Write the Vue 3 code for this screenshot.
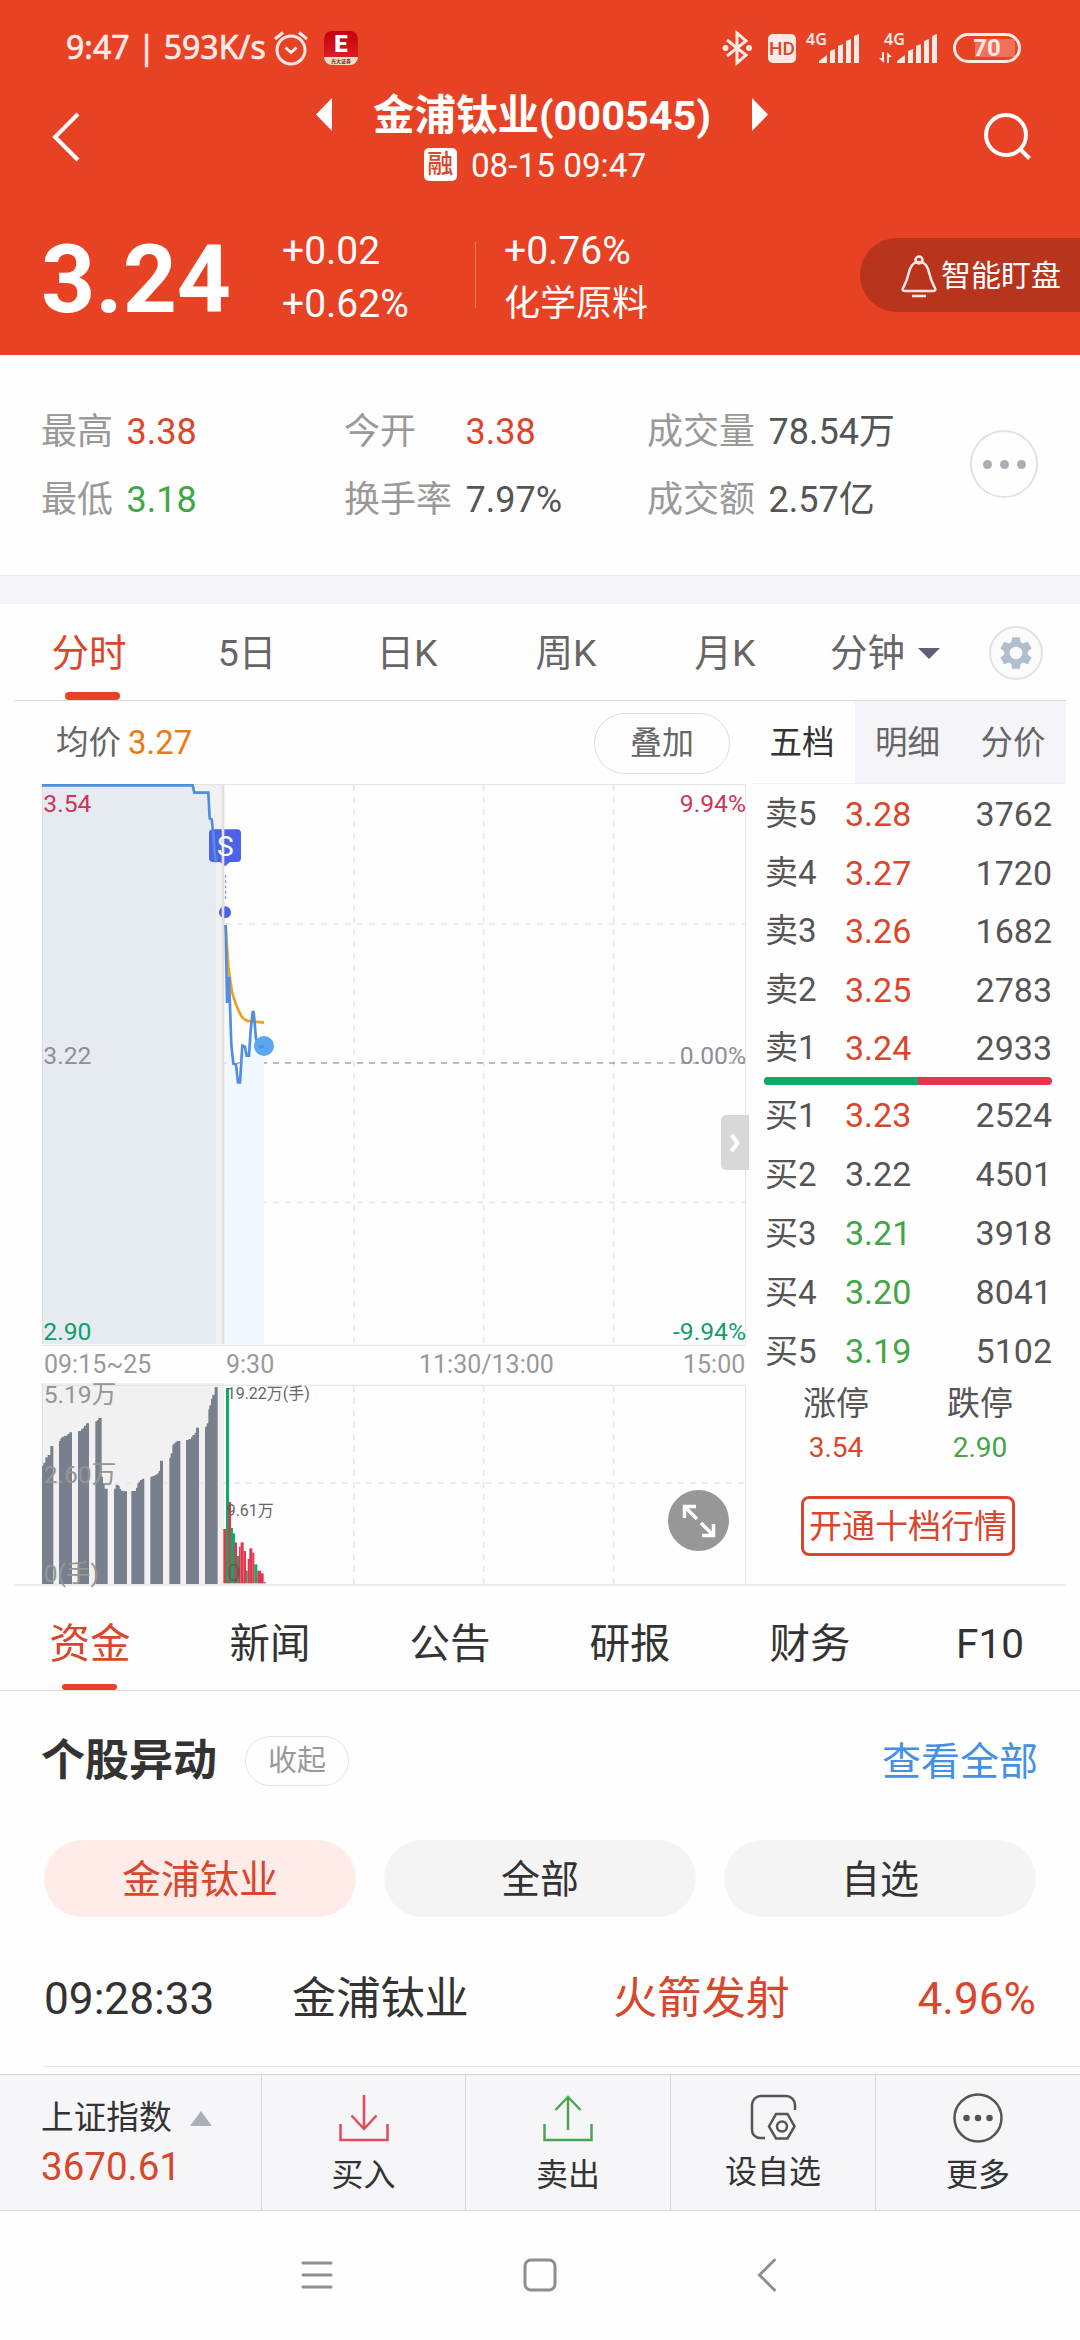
<template>
  <main class="page">
    <header class="header">
      <div class="status">
        <span class="status__time">9:47 | 593K/s</span>
        <svg class="status__alarm" width="36" height="36" viewBox="0 0 36 36">
          <circle cx="18" cy="20" r="14" />
          <path d="M12.5 17.5l5.5 5 5.5-5M2 9l8-6.500M34 9l-8-6.500" />
        </svg>
        <span class="status__app">
          <b class="status__app-letter">E</b>
          <i class="status__app-name">光大证券</i>
        </span>
        <div class="status__right">
          <svg class="status__bt" width="30" height="36" viewBox="0 0 30 36">
            <path d="M5 10l19 15-9 8V3l9 8L5 26" />
            <circle class="status__dot" cx="3.500" cy="18" r="3" />
            <circle class="status__dot" cx="27" cy="18" r="3" />
          </svg>
          <span class="status__hd">HD</span>
          <svg
            v-for="sim in 2"
            :key="sim"
            :class="['status__signal', { 'status__signal--data': sim === 2 }]"
            width="58"
            height="34"
            viewBox="0 0 58 34"
          >
            <text x="5" y="14">4G</text>
            <path
              d="M18 32v-2l8-6v8zM29 32V20l5-2v14zM37 32V15l5-2v19zM45 32V10l5-2v24zM53 32V5l5-2v29z"
            />
            <path
              v-if="sim === 2"
              d="M0 27h3v-6h2v11zM8 32V21l5 5h-3v6z"
            />
          </svg>
          <span class="status__battery"><b>70</b></span>
        </div>
      </div>

      <div class="title">
        <svg class="title__back" width="30" height="50" viewBox="0 0 30 50">
          <path d="M27 2L4 25l23 23" />
        </svg>
        <div class="title__center">
          <div class="title__name">
            <svg width="16" height="33" viewBox="0 0 16 33">
              <path d="M16 0v33L0 16.500z" />
            </svg>
            <h1 class="title__h1">金浦钛业(000545)</h1>
            <svg width="16" height="33" viewBox="0 0 16 33">
              <path d="M0 0v33l16-16.500z" />
            </svg>
          </div>
          <div class="title__date">
            <span class="title__badge">融</span>
            <span>08-15 09:47</span>
          </div>
        </div>
        <svg class="title__search" width="50" height="50" viewBox="0 0 50 50">
          <circle cx="23" cy="23" r="20" />
          <path d="M37 37l9.500 9.500" />
        </svg>
      </div>

      <div class="price">
        <strong class="price__now">3.24</strong>
        <div class="price__col"><span>+0.02</span><span>+0.62%</span></div>
        <div class="price__col price__col--sector">
          <span>+0.76%</span><span class="price__sector">化学原料</span>
        </div>
        <button class="price__watch">
          <svg width="36" height="42" viewBox="0 0 36 42">
            <circle cx="18" cy="5" r="3.500" />
            <path
              d="M18 7c-7 0-9 6-10.500 12C6 26 4 29 2 33c-1 2 0 3 2 3h28c2 0 3-1 2-3-2-4-4-7-5.500-14C27 13 25 7 18 7zM11 41h14"
            />
          </svg>
          智能盯盘
        </button>
      </div>
    </header>

    <section class="stats">
      <dl class="stats__grid">
        <div v-for="s in stats" :key="s.label" class="stats__item">
          <dt class="stats__label">{{ s.label }}</dt>
          <dd :class="['stats__value', s.tone]">{{ s.value }}</dd>
        </div>
      </dl>
      <span class="stats__more"><i></i><i></i><i></i></span>
    </section>

    <nav class="periods">
      <a
        v-for="(p, i) in periods"
        :key="p"
        :class="['periods__tab', { 'periods__tab--active': i === 0 }]"
        >{{ p }}</a
      >
      <a class="periods__minute">分钟<i class="periods__caret"></i></a>
      <span class="periods__gear">
        <svg width="38" height="38" viewBox="0 0 24 24">
          <path
            d="M19.430 12.980c.04-.32.07-.64.07-.98s-.03-.66-.07-.98l2.110-1.650c.19-.15.24-.42.12-.64l-2-3.460c-.12-.22-.39-.3-.61-.22l-2.490 1c-.52-.4-1.080-.73-1.690-.98l-.38-2.650C14.460 2.180 14.250 2 14 2h-4c-.25 0-.46.18-.49.42l-.38 2.650c-.61.25-1.170.59-1.690.98l-2.490-1c-.23-.09-.49 0-.61.22l-2 3.460c-.13.22-.07.49.12.64l2.110 1.650c-.04.32-.07.65-.07.98s.03.66.07.98l-2.110 1.650c-.19.15-.24.42-.12.64l2 3.460c.12.22.39.3.61.22l2.490-1c.52.4 1.080.73 1.690.98l.38 2.650c.03.24.24.42.49.42h4c.25 0 .46-.18.49-.42l.38-2.650c.61-.25 1.170-.59 1.690-.98l2.490 1c.23.09.49 0 .61-.22l2-3.460c.12-.22.07-.49-.12-.64zM12 16a4 4 0 110-8 4 4 0 010 8z"
          />
        </svg>
      </span>
    </nav>

    <section class="quote">
      <div class="chart">
        <div class="chart__head">
          <span>均价</span><span class="chart__avg">3.27</span>
          <button class="chart__overlay">叠加</button>
        </div>

        <div class="chart__plot">
          <svg class="chart__svg" width="708" height="562" viewBox="126 252 2124 1686">
            <path class="zone" d="M126 252H673V1932H126z" />
            <path class="pre-area" :d="`${preLine}V1932H126z`" />
            <path class="grid" d="M1062 254V1932M1451 254V1932M1841 254V1932" />
            <path class="grid" d="M675 672H2237M675 1507H2237" />
            <path class="grid grid--zero" d="M675 1089H2237" />
            <path class="frame" d="M126 254H2237V1932M126 1936H2237" />
            <path class="frame frame--left" d="M127 254V1932" />
            <path class="area" :d="`${priceLine}V1932H677z`" />
            <path
              class="marker"
              d="M639 388H711a12 12 0 0 1 12 12V474a12 12 0 0 1-12 12H690L675 499 660 486H639a12 12 0 0 1-12-12V400a12 12 0 0 1 12-12z"
            />
            <circle class="marker" cx="675" cy="637" r="18" />
            <path class="stem" d="M677 525V604" />
            <path class="open-bar" d="M669 254V1932" />
            <text class="marker-text" x="676" y="467">S</text>
            <path class="line" :d="preLine" />
            <path class="line line--avg" d="M677 675L685 800 696 875Q708 920 724 948 735 965 756 964L792 968" />
            <path class="line" :d="priceLine" />
            <circle class="now" cx="792" cy="1038" r="30" />
            <path class="line" d="M775 1040H792" />
            <text class="axis axis--up" x="130" y="335">3.54</text>
            <text class="axis axis--flat" x="130" y="1091">3.22</text>
            <text class="axis axis--down" x="130" y="1920">2.90</text>
            <text class="axis axis--up axis--end" x="2238" y="335">9.94%</text>
            <text class="axis axis--flat axis--end" x="2238" y="1091">0.00%</text>
            <text class="axis axis--down axis--end" x="2238" y="1920">-9.94%</text>
          </svg>
          <span class="chart__handle">
            <svg width="12" height="22" viewBox="0 0 12 22">
              <path d="M2.500 3l6 8-6 8" />
            </svg>
          </span>
        </div>

        <div class="chart__times">
          <span>09:15~25</span><span>9:30</span><span>11:30/13:00</span
          ><span>15:00</span>
        </div>

        <div class="chart__volume">
          <svg class="chart__svg" width="708" height="201" viewBox="126 189 2124 603">
            <path class="zone" d="M126 189H673V792H126z" />
            <path class="frame" d="M126 196H2237V792" />
            <path class="frame frame--left" d="M127 189V792" />
            <path class="grid" d="M1062 198V792M1451 198V792M1841 198V792M126 489H2237" />
            <path v-for="d in preBars" :key="d" class="pre-bar" :d="`M${d}V792z`" />
            <rect
              v-for="[x, w, y, up] in bars"
              :key="x"
              :class="up ? 'bar--up' : 'bar--down'"
              :x="x"
              :y="y"
              :width="w"
              :height="790 - y"
            />
            <text class="axis axis--vol" x="131" y="248">5.19万</text>
            <text class="axis axis--vol" x="131" y="489">2.60万</text>
            <text class="axis axis--vol" x="131" y="785">0(手)</text>
            <text class="axis axis--small" x="680" y="238">19.22万(手)</text>
            <text class="axis axis--small" x="680" y="589">9.61万</text>
            <text class="axis axis--faint" x="680" y="782">0</text>
          </svg>
          <span class="chart__expand">
            <svg width="34" height="34" viewBox="0 0 34 34">
              <path d="M15 15L2.500 2.500M2.500 14V2.500H14M19 19l12.500 12.500M31.500 20v11.500H20" />
            </svg>
          </span>
        </div>
      </div>

      <aside class="book">
        <div class="book__tabs">
          <span class="book__tab book__tab--active">五档</span>
          <span class="book__tab">明细</span>
          <span class="book__tab">分价</span>
        </div>
        <ul class="book__list">
          <li v-for="r in sells" :key="r[0]" class="book__row">
            <span>{{ r[0] }}</span><span :class="r[3]">{{ r[1] }}</span><span>{{ r[2] }}</span>
          </li>
        </ul>
        <div class="book__ratio"><i></i></div>
        <ul class="book__list book__list--buy">
          <li v-for="r in buys" :key="r[0]" class="book__row">
            <span>{{ r[0] }}</span><span :class="r[3]">{{ r[1] }}</span><span>{{ r[2] }}</span>
          </li>
        </ul>
        <div class="book__limits">
          <span>涨停</span><span>跌停</span>
          <b class="up">3.54</b><b class="down">2.90</b>
        </div>
        <button class="book__open">开通十档行情</button>
      </aside>
    </section>

    <nav class="sections">
      <a
        v-for="(s, i) in sections"
        :key="s"
        :class="['sections__tab', { 'sections__tab--active': i === 0 }]"
        >{{ s }}</a
      >
    </nav>

    <section class="moves">
      <div class="moves__head">
        <h2 class="moves__h2">个股异动</h2>
        <button class="moves__fold">收起</button>
        <a class="moves__all">查看全部</a>
      </div>
      <div class="moves__chips">
        <span class="moves__chip moves__chip--active">金浦钛业</span>
        <span class="moves__chip">全部</span>
        <span class="moves__chip">自选</span>
      </div>
      <div class="moves__row">
        <span>09:28:33</span>
        <span>金浦钛业</span>
        <span class="up">火箭发射</span>
        <span class="up moves__pct">4.96%</span>
      </div>
    </section>

    <footer class="dock">
      <div class="dock__index">
        <span class="dock__name">上证指数<i class="dock__caret"></i></span>
        <span class="dock__points up">3670.61</span>
      </div>
      <a class="dock__item">
        <svg class="dock__icon dock__icon--buy" width="52" height="52" viewBox="0 0 52 52">
          <path d="M26 3v34M13.500 23.500L26 37l12.500-13.500M2.500 32v16h47V32" />
        </svg>
        买入
      </a>
      <a class="dock__item">
        <svg class="dock__icon dock__icon--sell" width="52" height="52" viewBox="0 0 52 52">
          <path d="M26 38V5M13.500 18L26 5l12.500 13M2.500 32v16h47V32" />
        </svg>
        卖出
      </a>
      <a class="dock__item dock__item--watch">
        <svg class="dock__icon" width="52" height="52" viewBox="0 0 52 52">
          <path
            d="M48 18V13a9 9 0 0 0-9-9H14a9 9 0 0 0-9 9v25a8 8 0 0 0 8 8h5M29 22h11.500l7 12.500-7 12H29l-7-12z"
          />
          <circle cx="35" cy="34.500" r="5" />
        </svg>
        设自选
      </a>
      <a class="dock__item">
        <svg class="dock__icon" width="52" height="52" viewBox="0 0 52 52">
          <circle cx="26" cy="26" r="23.500" />
          <path class="dock__dots" d="M14.500 26h.01M26 26h.01M37.500 26h.01" />
        </svg>
        更多
      </a>
    </footer>

    <div class="keys">
      <svg width="32" height="34" viewBox="0 0 32 34">
        <path d="M2 5h28M2 17h28M2 29h28" />
      </svg>
      <svg class="keys__home" width="34" height="34" viewBox="0 0 34 34">
        <rect x="2" y="2" width="30" height="30" rx="6" />
      </svg>
      <svg width="20" height="34" viewBox="0 0 20 34">
        <path d="M17.500 2l-15 15 15 15" />
      </svg>
    </div>
  </main>
</template>

<script setup>
const stats = [
  { label: "最高", value: "3.38", tone: "up" },
  { label: "今开", value: "3.38", tone: "up" },
  { label: "成交量", value: "78.54万" },
  { label: "最低", value: "3.18", tone: "down" },
  { label: "换手率", value: "7.97%" },
  { label: "成交额", value: "2.57亿" },
];

const periods = ["分时", "5日", "日K", "周K", "月K"];
const sections = ["资金", "新闻", "公告", "研报", "财务", "F10"];

const sells = [
  ["卖5", "3.28", "3762", "up"],
  ["卖4", "3.27", "1720", "up"],
  ["卖3", "3.26", "1682", "up"],
  ["卖2", "3.25", "2783", "up"],
  ["卖1", "3.24", "2933", "up"],
];
const buys = [
  ["买1", "3.23", "2524", "up"],
  ["买2", "3.22", "4501", ""],
  ["买3", "3.21", "3918", "down"],
  ["买4", "3.20", "8041", "down"],
  ["买5", "3.19", "5102", "down"],
];

// chart coordinates are in thirds of a pixel
const preLine = "M126 256H578L583 278H625L629 355 635 358 640 400 643 450 648 487";
const priceLine =
  "M677 675L681 905H686L687 830 694 1035 700 1091 708 1093 714 1147H720L727 1037 735 1040 740 1067H747L752 990 758 936H761L768 1015 775 1040H792";

const preBars = [
  "126 792V437H130V428H136V412H143V405H151V378H160",
  "177 792V363H181V355H186V350H193V347H202V342H208V337H216",
  "234 792V333H243V328H248V323H252V317H258V310H267",
  "286 792V304H291V300H295V294H305V470H309V490H314V506H323",
  "342 792V506H347V494H355V497H359V507H363V512H370V514H381",
  "394 792V513H408V503H412V490H416V485H420V480H426V476H433",
  "451 792V470H458V467H465V464H472V460H476V452H480V422H489",
  "508 792V413H512V400H517V374H521V370H526V366H530V363H541",
  "558 792V360H566V357H573V352H577V345H584V338H588V323H597",
  "615 792V320H620V310H625V268H628V256H633V236H637V224H644V201H653",
];

// x, width, top, rising
const bars = [
  [670, 9, 627, true],
  [678, 9, 204, false],
  [685, 8, 546, true],
  [692, 7, 624, false],
  [699, 6, 640, false],
  [703, 8, 667, true],
  [711, 6, 708, false],
  [717, 5, 680, true],
  [722, 9, 667, true],
  [731, 7, 693, true],
  [738, 5, 752, false],
  [743, 6, 717, true],
  [748, 9, 685, true],
  [757, 6, 698, true],
  [763, 9, 733, false],
  [772, 11, 752, true],
  [783, 8, 760, true],
  [791, 6, 786, true],
];
</script>

<style>
body {
  background: #fefefe;
}
</style>

<style scoped>
.page {
  color: #333;
  font-family: Roboto, "Noto Sans CJK SC", sans-serif;
  height: 2340px;
  line-height: 1.2;
  overflow: hidden;
  width: 1080px;
}

.page *,
.page *::after {
  box-sizing: border-box;
}

svg {
  display: block;
  flex: none;
  overflow: visible;
}

h1,
h2,
dl,
dd,
ul {
  margin: 0;
  padding: 0;
}

button {
  background: none;
  border: 0;
  font-family: inherit;
  line-height: inherit;
  padding: 0;
  white-space: nowrap;
}

.up {
  color: #d8472c;
}

.down {
  color: #43a547;
}

.header {
  background: #e84225;
  color: #fff;
  height: 355px;
}

/* status bar */
.status {
  align-items: center;
  color: #ffe9e4;
  display: flex;
  height: 96px;
  padding: 0 59px 0 66px;
}

.status__time {
  -webkit-text-stroke: 0.7px currentColor;
  font-family: "Noto Sans", sans-serif;
  font-size: 32px;
  line-height: 40px;
  margin-top: -3px;
  white-space: nowrap;
  width: 207px;
}

.status__alarm {
  fill: none;
  stroke: currentColor;
  stroke-width: 3;
}

.status__app {
  background: linear-gradient(#c4000c, #d81f22 76%, #f8dcc4 76%);
  border-radius: 8px;
  display: flex;
  flex-direction: column;
  height: 34px;
  margin-left: 15px;
  overflow: hidden;
  text-align: center;
  width: 34px;
}

.status__app-letter {
  color: #fff;
  font-size: 24px;
  font-weight: 900;
  line-height: 27px;
}

.status__app-name {
  color: #6a2a1a;
  font-size: 5px;
  font-style: normal;
  font-weight: bold;
  line-height: 6px;
}

.status__right {
  align-items: center;
  display: flex;
  margin-left: auto;
}

.status__bt {
  fill: none;
  stroke: currentColor;
  stroke-width: 3;
}

.status__dot {
  fill: currentColor;
  stroke: none;
}

.status__hd {
  background: #ffe9e4;
  border-radius: 5px;
  color: #d8472c;
  font-size: 19px;
  font-weight: 500;
  height: 29px;
  line-height: 30px;
  margin-left: 16px;
  text-align: center;
  width: 28px;
}

.status__signal {
  fill: currentColor;
  font: 600 16px "Noto Sans", sans-serif;
  margin-left: 5px;
}

.status__signal--data {
  margin-left: 20px;
}

.status__battery {
  align-items: center;
  background: linear-gradient(#f0705a, #f0705a) 19px 3px / 40px 18px no-repeat;
  border: 3px solid #ffe9e4;
  border-radius: 15px;
  display: flex;
  font-size: 24px;
  height: 30px;
  justify-content: center;
  margin-left: 16px;
  width: 68px;
}

/* title */
.title {
  align-items: center;
  display: flex;
  height: 88px;
  justify-content: space-between;
  padding: 0 47px 0 51px;
}

.title__back,
.title__search {
  fill: none;
  margin-top: -7px;
  stroke: #fff;
  stroke-width: 4;
}

.title__center {
  margin-left: 20px;
}

.title__name {
  align-items: center;
  display: flex;
  fill: #fff;
  height: 40px;
  justify-content: space-between;
  width: 453px;
}

.title__name svg {
  margin-top: -3px;
}

.title__h1 {
  font-size: 41.5px;
  font-weight: bold;
  line-height: 40px;
  white-space: nowrap;
}

.title__date {
  align-items: center;
  display: flex;
  font-size: 33.3px;
  gap: 14px;
  justify-content: center;
  line-height: 36px;
  padding: 12px 14px 0 0;
  white-space: nowrap;
}

.title__badge {
  background: #fff;
  border-radius: 5px;
  color: #d8472c;
  font-size: 26px;
  font-weight: 500;
  height: 33px;
  line-height: 32px;
  margin-top: -4px;
  text-align: center;
  width: 33px;
}

/* price */
.price {
  align-items: center;
  display: grid;
  grid-template-columns: 241px 193px 385px 220px;
  height: 171px;
  padding: 11px 0 0 41px;
}

.price__now {
  font-size: 94.5px;
  line-height: 100px;
  margin-top: 9px;
}

.price__col {
  display: flex;
  flex-direction: column;
  font-size: 39px;
  line-height: 53px;
  margin-top: 6px;
}

.price__col--sector {
  background: linear-gradient(#f3806c, #f3806c) 0 17px / 1px 66px no-repeat;
  padding-left: 29px;
}

.price__sector {
  font-size: 36px;
}

.price__watch {
  align-items: center;
  background: #b8341d;
  border-radius: 37px 0 0 37px;
  color: #fff;
  display: flex;
  font-size: 30px;
  gap: 4px;
  height: 74px;
  padding: 1px 0 0 41px;
}

.price__watch svg {
  fill: none;
  stroke: #ffe9e4;
  stroke-width: 2.5;
}

/* stats */
.stats {
  border-bottom: 1px solid #eaeaec;
  display: flex;
  height: 221px;
  justify-content: space-between;
  padding: 44px 42px 0 41px;
}

.stats__grid {
  display: grid;
  grid-template-columns: 303px 303px 290px;
  grid-template-rows: 68px 68px;
}

.stats__item {
  align-items: center;
  display: flex;
  font-size: 36px;
}

.stats__label {
  color: #999;
  width: 121.5px;
}

.stats__item:nth-child(3n + 1) .stats__label {
  width: 85.5px;
}

.stats__value:not(.up, .down) {
  color: #555;
}

.stats__more {
  align-items: center;
  border: 2px solid #e2e2e2;
  border-radius: 50%;
  display: flex;
  gap: 8px;
  height: 68px;
  justify-content: center;
  margin-top: 31px;
  width: 68px;
}

.stats__more i {
  background: #a9aeb7;
  border-radius: 50%;
  height: 9px;
  width: 9px;
}

/* period tabs */
.periods {
  align-items: center;
  background: linear-gradient(#dcdcde, #dcdcde) 14px 100% / 1052px 1px no-repeat;
  border-top: 28px solid #f5f4f9;
  color: #666;
  display: grid;
  font-size: 37.5px;
  grid-template-columns: 150px 166px 154px 164px 154px 187px 54px;
  height: 125px;
  padding: 0 14px;
}

.periods__tab {
  height: 97px;
  line-height: 98px;
  position: relative;
  text-align: center;
}

.periods__tab--active {
  color: #d8472c;
}

.periods__tab--active::after {
  background: #e84225;
  border-radius: 4px;
  bottom: 1px;
  content: "";
  height: 8px;
  left: 51px;
  position: absolute;
  width: 55px;
}

.periods__minute {
  align-items: center;
  display: flex;
  gap: 13px;
  padding: 1px 0 0 28px;
}

.periods__caret {
  border: 11px solid transparent;
  border-bottom: 0;
  border-top-color: #5d6078;
}

.periods__gear {
  background: #fbfbfc;
  border: 2px solid #e2e2e2;
  border-radius: 50%;
  display: grid;
  fill: #b0bfd0;
  height: 54px;
  place-items: center;
  width: 54px;
}

/* quote */
.quote {
  border-bottom: 2px solid #ececec;
  display: flex;
  height: 885px;
  justify-content: space-between;
  margin: 0 14px;
  padding-left: 28px;
}

.chart {
  width: 708px;
}

.chart__head {
  align-items: center;
  color: #666;
  display: flex;
  font-size: 32.5px;
  height: 83px;
  padding: 1px 20px 0 14px;
}

.chart__avg {
  color: #e97b12;
  font-size: 33px;
  margin-left: 7px;
}

.chart__overlay {
  border: 1px solid #ddd;
  border-radius: 31px;
  color: #666;
  font-size: 32px;
  height: 61px;
  margin-left: auto;
  width: 136px;
}

.chart__plot,
.chart__volume {
  position: relative;
}

.chart__svg {
  fill: none;
}

.zone {
  fill: #f1f1f1;
}

.pre-area {
  fill: #e6ebf2;
}

.area {
  fill: #f1f8ff;
}

.grid {
  stroke: #e8e8e8;
  stroke-dasharray: 18 18;
  stroke-width: 5;
}

.grid--zero {
  stroke: #a5a5a5;
}

.frame {
  stroke: #e2e2e2;
  stroke-width: 3;
}

.frame--left {
  stroke: #d9dce2;
}

.open-bar {
  stroke: #e0e0e0;
  stroke-width: 8;
}

.line {
  stroke: #528ee0;
  stroke-width: 8;
}

.line--avg {
  stroke: #efa01f;
}

.marker {
  fill: #4e62e8;
}

.stem {
  stroke: #6472e0;
  stroke-dasharray: 8 8;
  stroke-width: 3;
}

.marker-text {
  fill: #fff;
  font-size: 84px;
  text-anchor: middle;
}

.now {
  fill: #5ba6f0;
}

.axis {
  font-size: 74px;
}

.axis--end {
  text-anchor: end;
}

.axis--up {
  fill: #cf3557;
}

.axis--flat {
  fill: #8d9097;
}

.axis--down {
  fill: #119e69;
}

.axis--vol {
  fill: #959595;
}

.axis--small {
  fill: #666;
  font-size: 48px;
}

.axis--faint {
  fill: #555;
  fill-opacity: 0.6;
}

.pre-bar {
  fill: #79808d;
}

.bar--up {
  fill: #e5344c;
}

.bar--down {
  fill: #0cab68;
}

.chart__handle {
  align-items: center;
  background: #d8d8d8;
  border-radius: 5px 0 0 5px;
  display: flex;
  height: 55px;
  left: 679px;
  padding-left: 8px;
  position: absolute;
  top: 331px;
  width: 28px;
}

.chart__handle path,
.chart__expand path {
  fill: none;
  stroke: #fff;
  stroke-width: 4;
}

.chart__times {
  color: #999;
  display: grid;
  font-size: 25px;
  grid-template-columns: 182px 193px 264px auto;
  height: 37px;
  line-height: 38px;
  padding-left: 2px;
}

.chart__expand {
  background: #979797;
  border-radius: 50%;
  display: grid;
  height: 61px;
  left: 626px;
  place-items: center;
  position: absolute;
  top: 107px;
  width: 61px;
}

.chart__expand path {
  stroke-width: 3.5;
}

/* order book */
.book {
  color: #555;
  width: 314px;
}

.book__tabs {
  border-bottom: 1px solid #f1f1f3;
  display: grid;
  font-size: 32.5px;
  grid-template-columns: 103px 105px 106px;
  height: 83px;
  line-height: 84px;
  overflow: hidden;
  text-align: center;
}

.book__tab {
  background: #f5f4f9;
  color: #666;
}

.book__tab--active {
  background: none;
  color: #333;
  text-indent: -3px;
}

.book__list {
  list-style: none;
  padding: 1px 14px 0 13px;
}

.book__row {
  display: grid;
  font-size: 34px;
  grid-template-columns: 80px 100px 1fr;
  height: 58.6px;
  line-height: 58.6px;
}

.book__list--buy .book__row {
  height: 59px;
  line-height: 59px;
}

.book__row span:first-child {
  font-size: 33px;
}

.book__row span:last-child {
  text-align: right;
}

.book__ratio {
  background: #e5344c;
  border-radius: 4px;
  height: 8px;
  margin: -1px 14px 0 12px;
  overflow: hidden;
}

.book__ratio i {
  background: #0cab68;
  display: block;
  height: 8px;
  width: 154px;
}

.book__limits {
  display: grid;
  font-size: 33px;
  grid-template-columns: 144px 144px;
  line-height: 44px;
  padding: 1px 0 0 12px;
  text-align: center;
}

.book__limits b {
  font-size: 28px;
  font-weight: normal;
}

.book__open {
  border: 3px solid #d8472c;
  border-radius: 8px;
  color: #d8472c;
  display: block;
  font-size: 33px;
  height: 60px;
  margin: 26px 0 0 49px;
  padding-top: 2px;
  width: 214px;
}

/* section tabs */
.sections {
  border-bottom: 1px solid #dcdcdc;
  display: flex;
  font-size: 40.5px;
  height: 105px;
}

.sections__tab {
  flex: 1;
  line-height: 116px;
  position: relative;
  text-align: center;
}

.sections__tab--active {
  color: #d8472c;
}

.sections__tab--active::after {
  background: #e84225;
  border-radius: 3px;
  bottom: 0;
  content: "";
  height: 6px;
  left: 62px;
  position: absolute;
  width: 55px;
}

/* moves */
.moves {
  height: 383px;
  padding-top: 30px;
}

.moves__head {
  align-items: center;
  display: flex;
  height: 80px;
  padding: 0 42px 0 41px;
}

.moves__h2 {
  font-size: 44px;
  line-height: 80px;
}

.moves__fold {
  border: 1px solid #e4e4e4;
  border-radius: 25px;
  color: #999;
  font-size: 29px;
  height: 50px;
  margin-left: 28px;
  padding-top: 1px;
  width: 104px;
}

.moves__all {
  color: #468fe6;
  font-size: 39px;
  margin: 2px 0 0 auto;
}

.moves__chips {
  display: grid;
  font-size: 39px;
  gap: 28px;
  grid-template-columns: repeat(3, 312px);
  padding: 39px 44px 0;
}

.moves__chip {
  background: #f4f4f4;
  border-radius: 39px;
  height: 77px;
  line-height: 81px;
  text-align: center;
}

.moves__chip--active {
  background: #ffebe8;
  color: #d8472c;
}

.moves__row {
  border-bottom: 1px solid #e6e6e6;
  display: grid;
  font-size: 44.2px;
  grid-template-columns: 248px 321px 250px 173px;
  height: 150px;
  line-height: 164px;
  margin-left: 44px;
}

.moves__pct {
  text-align: right;
}

/* dock */
.dock {
  background: #f6f6f8;
  border-bottom: 1px solid #dedede;
  border-top: 1px solid #d6d6d8;
  display: grid;
  font-size: 32px;
  grid-template-columns: 261px 204px 205px 205px 205px;
  height: 137px;
}

.dock__index {
  display: flex;
  flex-direction: column;
  padding: 19px 0 0 41px;
}

.dock__name {
  align-items: center;
  display: flex;
  font-size: 32.7px;
  gap: 18px;
  line-height: 48px;
}

.dock__caret {
  border: 11px solid transparent;
  border-bottom: 15px solid #a9aeb7;
  border-top: 0;
}

.dock__points {
  font-size: 38.5px;
  line-height: 50px;
}

.dock__item {
  align-items: center;
  border-left: 1px solid #d8d8da;
  display: flex;
  flex-direction: column;
  line-height: 40px;
  padding-top: 17px;
}

.dock__item svg {
  margin-bottom: 11px;
}

.dock__item--watch {
  font-size: 32px;
}

.dock__item--watch svg {
  margin-bottom: 8px;
}

.dock__icon {
  fill: none;
  stroke: #555;
  stroke-width: 2.5;
}

.dock__icon--buy {
  stroke: #e2495c;
}

.dock__icon--sell {
  stroke: #4aa653;
}

.dock__dots {
  stroke-linecap: round;
  stroke-width: 6.5;
}

/* system keys */
.keys {
  align-items: center;
  display: flex;
  fill: none;
  height: 128px;
  justify-content: space-between;
  padding: 0 303px 0 301px;
  stroke: #8e8e8e;
  stroke-linecap: round;
  stroke-width: 3;
}

.keys__home {
  margin-right: 10px;
}
</style>
